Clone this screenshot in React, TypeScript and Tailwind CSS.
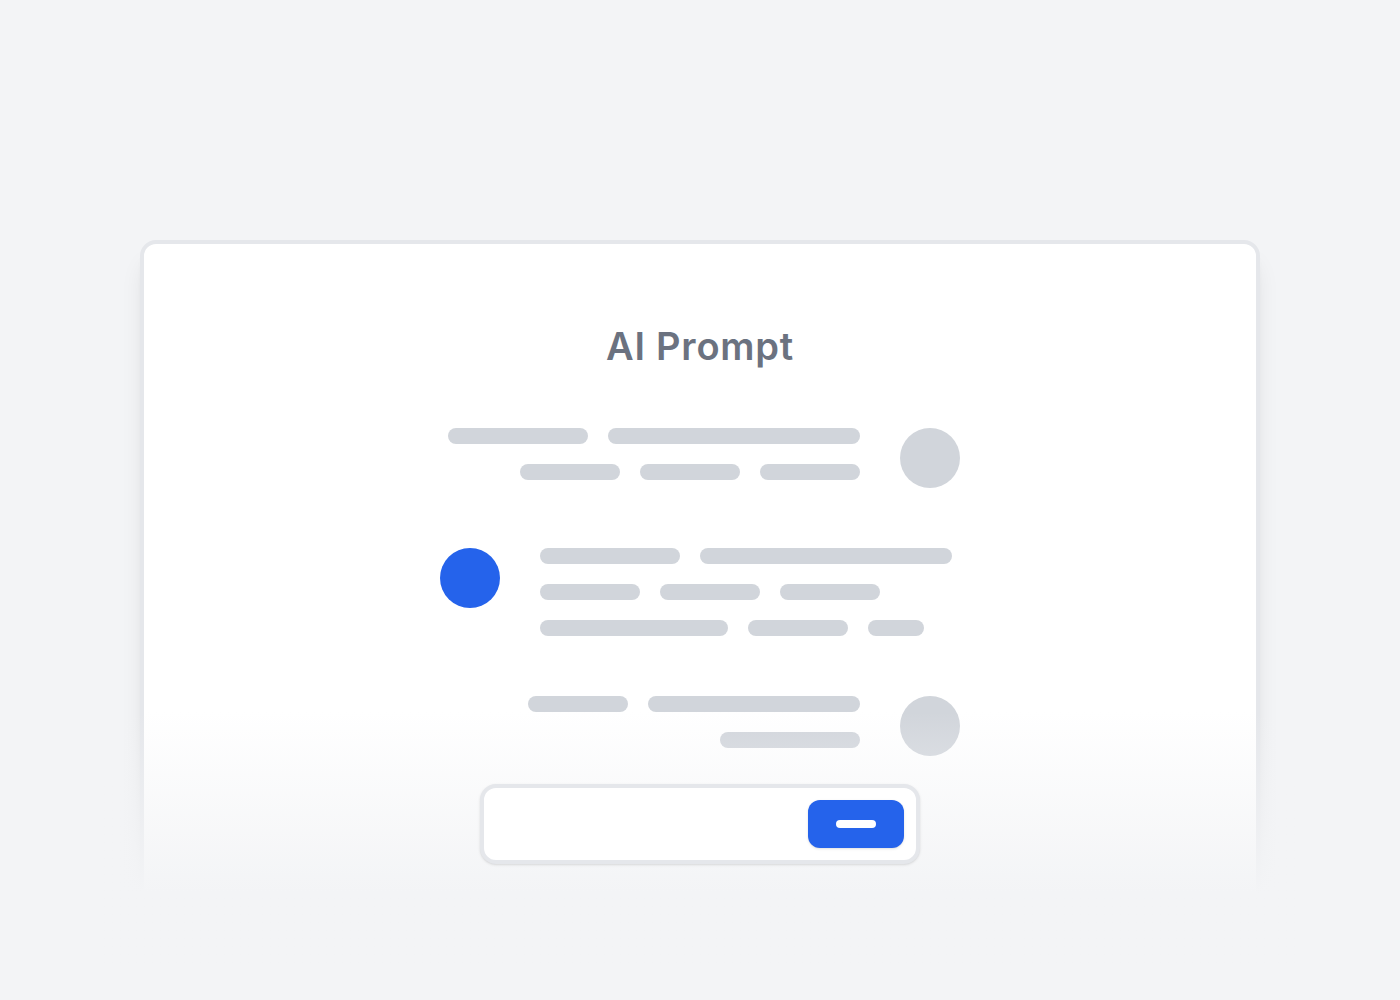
import React from 'react';

const Bar = ({ w }: { w: string }) => <div className={`h-4 rounded-full bg-[#d1d5db] ${w}`} />;

const App = () => {
  return (
    <div className="min-h-screen bg-[#f3f4f6] pt-[240px] flex justify-center overflow-hidden font-['Inter',sans-serif]">
      <div className="relative w-[1120px] h-[680px] rounded-2xl border-4 border-[#e5e7eb] bg-white shadow-xl">
        <div className="flex flex-col items-center pt-[78px]">
          <h1 className="text-[38px] leading-[48px] tracking-[0.02em] font-semibold text-[#6b7280]">AI Prompt</h1>

          {/* conversation */}
          <div className="mt-[58px] w-[520px] flex flex-col gap-[60px]">
            <div className="flex justify-end items-start gap-10">
              <div className="flex flex-col items-end gap-5">
                <div className="flex gap-5">
                  <Bar w="w-[140px]" />
                  <Bar w="w-[252px]" />
                </div>
                <div className="flex gap-5">
                  <Bar w="w-[100px]" />
                  <Bar w="w-[100px]" />
                  <Bar w="w-[100px]" />
                </div>
              </div>
              <div className="w-[60px] h-[60px] rounded-full bg-[#d1d5db] shrink-0" />
            </div>

            <div className="flex items-start gap-10">
              <div className="w-[60px] h-[60px] rounded-full bg-[#2563eb] shrink-0" />
              <div className="flex flex-col gap-5">
                <div className="flex gap-5">
                  <Bar w="w-[140px]" />
                  <Bar w="w-[252px]" />
                </div>
                <div className="flex gap-5">
                  <Bar w="w-[100px]" />
                  <Bar w="w-[100px]" />
                  <Bar w="w-[100px]" />
                </div>
                <div className="flex gap-5">
                  <Bar w="w-[188px]" />
                  <Bar w="w-[100px]" />
                  <Bar w="w-[56px]" />
                </div>
              </div>
            </div>

            <div className="flex justify-end items-start gap-10">
              <div className="flex flex-col items-end gap-5">
                <div className="flex gap-5">
                  <Bar w="w-[100px]" />
                  <Bar w="w-[212px]" />
                </div>
                <Bar w="w-[140px]" />
              </div>
              <div className="w-[60px] h-[60px] rounded-full bg-[#d1d5db] shrink-0" />
            </div>
          </div>

          {/* prompt input */}
          <div className="relative z-20 mt-7 w-[440px] h-20 rounded-2xl border-4 border-[#e5e7eb] bg-white shadow-sm flex justify-end p-3">
            <button className="w-24 h-12 rounded-xl bg-[#2563eb] flex items-center justify-center shadow-sm">
              <span className="w-10 h-2 rounded-full bg-white" />
            </button>
          </div>
        </div>

        {/* bottom fade */}
        <div className="absolute z-10 -left-10 -right-10 -bottom-12 h-[252px] bg-gradient-to-b from-[#f3f4f6]/0 to-[#f3f4f6] to-[72%]" />
      </div>
    </div>
  );
};

export default App;
